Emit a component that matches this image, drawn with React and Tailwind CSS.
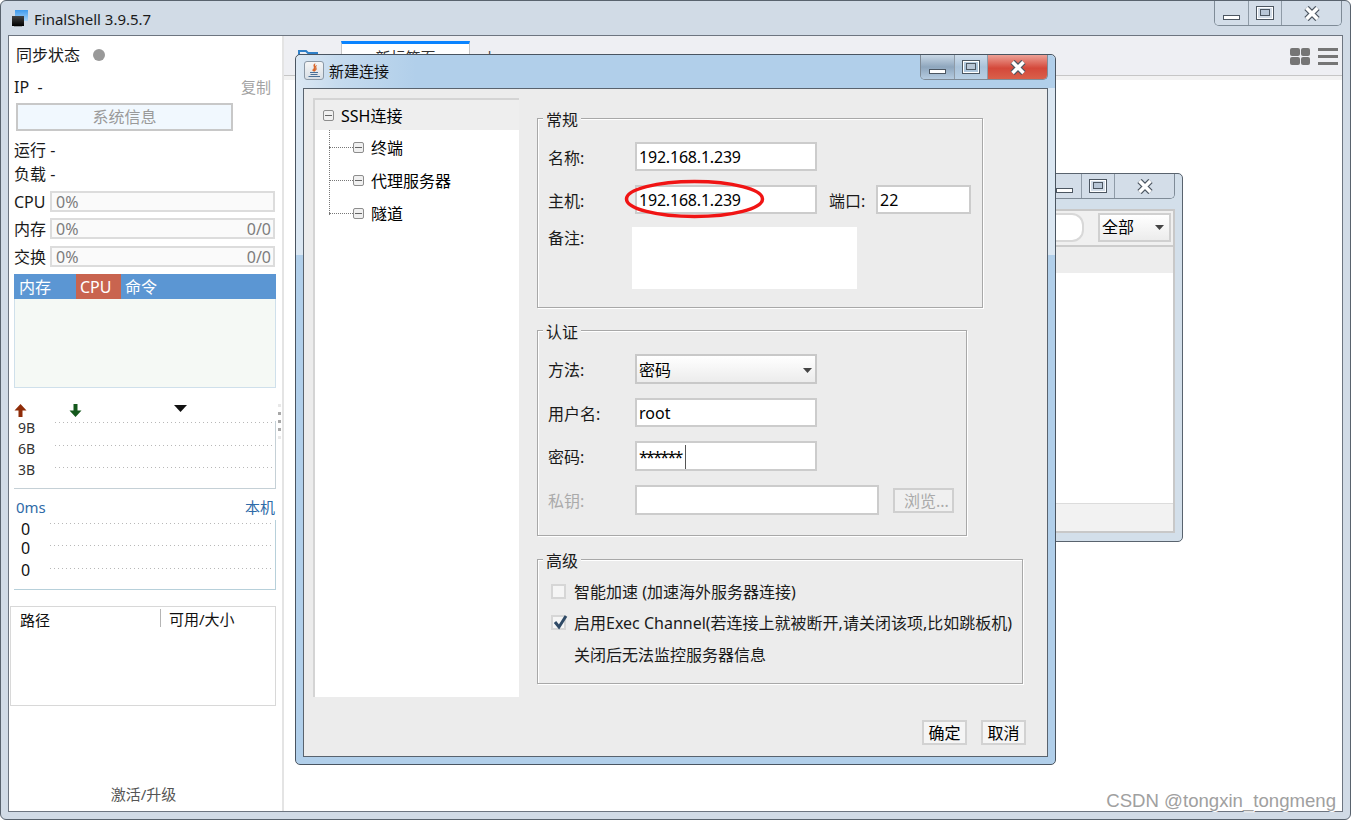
import React from "react";

const font = "font-['Noto_Sans','Noto_Sans_CJK_SC',sans-serif]";

const Glyph = ({ type }) => {
  if (type === "min") {
    return (
      <svg width="18" height="7" viewBox="0 0 18 7">
        <rect x="0.5" y="1.5" width="16" height="4" fill="#fff" stroke="#4c5661" />
      </svg>
    );
  }
  if (type === "max") {
    return (
      <svg width="18" height="14" viewBox="0 0 18 14">
        <rect x="0.5" y="0.5" width="17" height="13" fill="none" stroke="#4c5661" />
        <rect x="1.5" y="1.5" width="15" height="11" fill="none" stroke="#fff" />
        <rect x="4.5" y="3.5" width="9" height="6" fill="#b8c6d6" stroke="#4c5661" />
      </svg>
    );
  }
  return (
    <svg width="16" height="15" viewBox="0 0 16 15">
      <path d="M2.5 2 L13.5 13 M13.5 2 L2.5 13" stroke="#4c5661" strokeWidth="6" />
      <path d="M2.5 2 L13.5 13 M13.5 2 L2.5 13" stroke="#fff" strokeWidth="3.6" />
    </svg>
  );
};

const WinButtons = ({ active }) => (
  <div className="flex h-[25px] border border-t-0 border-[#7f8b97] rounded-b-[5px] overflow-hidden shrink-0">
    <div className={`w-[34px] flex items-end justify-center pb-[4px] border-r border-[#8f9ba7] ${active ? "bg-[linear-gradient(#c9d8e6,#8ea6bd_50%,#b5cbe0)]" : "bg-[#d3dde8]"}`}>
      <Glyph type="min" />
    </div>
    <div className={`w-[33px] flex items-center justify-center border-r border-[#8f9ba7] ${active ? "bg-[linear-gradient(#cfdeec,#a9c2d9_50%,#b8cfe4)]" : "bg-[#d3dde8]"}`}>
      <Glyph type="max" />
    </div>
    <div className={`w-[59px] flex items-center justify-center ${active ? "bg-[linear-gradient(#eda196,#d4483a_55%,#d9604a)]" : "bg-[#d3dde8]"}`}>
      <Glyph type="close" />
    </div>
  </div>
);

const Dots = ({ cls }) => (
  <div className={`h-[1px] bg-[repeating-linear-gradient(90deg,#b8b8b8_0,#b8b8b8_1px,transparent_1px,transparent_4px)] ${cls}`} />
);

const Metric = ({ label, value, extra, cls }) => (
  <div className={`flex items-center h-[21px] ml-[5px] ${cls}`}>
    <span className="w-[36px] pt-[2px] text-[#1a1a1a] leading-[21px] whitespace-nowrap">{label}</span>
    <div className="w-[225px] h-[21px] border-2 border-[#dcdcdc] bg-[#fafafa] flex items-center justify-between pl-[4px] pr-[2px] pt-[2px] text-[#7d7d7d] leading-[17px]">
      <span>{value}</span>
      <span>{extra}</span>
    </div>
  </div>
);

const netRows = [
  { label: "9B", h: "h-[21px]", line: "mt-[1px]" },
  { label: "6B", h: "h-[21px]", line: "mt-[3px]" },
  { label: "3B", h: "h-[28px]", line: "mt-[4px]" },
];

const pingRows = [
  { h: "h-[20px]", line: "mt-[3px]", text: "pt-[1px]" },
  { h: "h-[21px]", line: "mt-[5px]", text: "" },
  { h: "h-[29px]", line: "mt-[7px]", text: "pt-[1px]" },
];

const Sidebar = () => (
  <div className="relative w-[275px] shrink-0 bg-white border-r-2 border-[#e4e4e4] flex flex-col">
    <div className="h-[38px] pl-[7px] flex items-center gap-[13px] text-[#1a1a1a]">
      <span>同步状态</span>
      <span className="w-[12px] h-[12px] rounded-full bg-[#999999]" />
    </div>
    <div className="h-[26px] pl-[5px] pr-[11px] flex items-center justify-between">
      <span className="text-[#1a1a1a]">IP&nbsp; -</span>
      <span className="text-[#a3a3a3] text-[15px]">复制</span>
    </div>
    <div className="mt-[3px] ml-[7px] w-[217px] h-[28px] border-2 border-[#c8c8c8] bg-[#f1f8fe] text-[#9a9a9a] flex items-center justify-center">
      系统信息
    </div>
    <div className="mt-[7px] pl-[5px] h-[24px] leading-[24px] text-[#1a1a1a]">运行 -</div>
    <div className="pl-[5px] h-[24px] leading-[24px] text-[#1a1a1a]">负载 -</div>
    <Metric label="CPU" value="0%" cls="mt-[5px]" />
    <Metric label="内存" value="0%" extra="0/0" cls="mt-[6px]" />
    <Metric label="交换" value="0%" extra="0/0" cls="mt-[7px]" />
    <div className="mt-[7px] ml-[5px] w-[262px] h-[25px] bg-[#5b96d3] flex text-white leading-[27px]">
      <span className="w-[62px] pl-[5px]">内存</span>
      <span className="w-[45px] bg-[#c9644f] pl-[4px]">CPU</span>
      <span className="pl-[4px]">命令</span>
    </div>
    <div className="ml-[5px] w-[262px] h-[89px] bg-[#f5f9f5] border border-t-0 border-[#cfe0eb]" />
    <div className="mt-[15px] ml-[5px] w-[262px] h-[18px] flex items-start">
      <svg className="mt-[1px]" width="13" height="13" viewBox="0 0 13 13">
        <path d="M6.5 0 L12.5 6.5 H8.5 V13 H4.5 V6.5 H0.5 Z" fill="#8f2c08" />
      </svg>
      <svg className="mt-[1px] ml-[42px]" width="13" height="13" viewBox="0 0 13 13">
        <path d="M4.5 0 H8.5 V6.5 H12.5 L6.5 13 L0.5 6.5 H4.5 Z" fill="#14581c" />
      </svg>
      <svg className="mt-[2px] ml-[92px]" width="13" height="7" viewBox="0 0 13 7">
        <path d="M0 0 H13 L6.5 7 Z" fill="#111" />
      </svg>
    </div>
    <div className="ml-[5px] w-[262px] h-[68px] border-r border-b border-[#c5d0d6] text-[14px] text-[#333]">
      {netRows.map((r) => (
        <div key={r.label} className={`flex items-start ${r.h}`}>
          <span className="w-[41px] pl-[4px] leading-[14px]">{r.label}</span>
          <Dots cls={`w-[217px] ${r.line}`} />
        </div>
      ))}
    </div>
    <div className="mt-[9px] ml-[5px] w-[262px] h-[18px] pr-[1px] flex items-center justify-between text-[#2f6ba8] text-[15px] leading-[18px]">
      <span className="pl-[2px]">0ms</span>
      <span>本机</span>
    </div>
    <div className="mt-[4px] ml-[5px] w-[262px] h-[70px] border-r border-b border-[#b7d0da] text-[16px] text-[#111]">
      {pingRows.map((r, i) => (
        <div key={i} className={`flex items-start ${r.h}`}>
          <span className={`w-[36px] pl-[7px] leading-[16px] ${r.text}`}>0</span>
          <Dots cls={`w-[222px] ${r.line}`} />
        </div>
      ))}
    </div>
    <div className="mt-[16px] ml-[1px] w-[266px] h-[100px] border border-[#d8d8d8] flex items-start text-[#111] text-[15px]">
      <span className="w-[149px] pl-[9px] leading-[24px] mt-[1px]">路径</span>
      <span className="border-l border-[#b5b5b5] h-[18px] mt-[2px] pl-[8px] leading-[20px] whitespace-nowrap">可用/大小</span>
    </div>
    <div className="mt-auto h-[30px] mb-[2px] pr-[4px] flex items-center justify-center text-[#555] text-[15px]">激活/升级</div>
    <div className="absolute left-[269px] top-[368px] w-[3px] flex flex-col gap-[5px]">
      <span className="h-[3px] bg-[#e8e8e8]" />
      <span className="h-[3px] bg-[#a8a8a8]" />
      <span className="h-[3px] bg-[#a8a8a8]" />
      <span className="h-[3px] bg-[#a8a8a8]" />
      <span className="h-[3px] bg-[#e8e8e8]" />
    </div>
  </div>
);

const Toolbar = () => (
  <div className="h-[40px] bg-[#eeeff3] border-b border-[#c6c6c6] flex items-end pl-[14px] pr-[4px] shrink-0">
    <svg className="mb-[9px]" width="20" height="18" viewBox="0 0 20 18">
      <path d="M1 16 V3 H8 L10 5 H19 V16 Z" fill="none" stroke="#2f80c8" strokeWidth="2" />
    </svg>
    <div className="ml-[23px] w-[129px] h-[34px] bg-white border border-b-0 border-[#c6c6c6] border-t-[3px] border-t-[#0a84ff] text-center text-[#333] text-[15px] leading-[26px] shrink-0">
      新标签页
    </div>
    <span className="ml-[15px] mb-[10px] text-[#444] leading-[20px]">+</span>
    <div className="ml-auto mb-[10px] flex items-center gap-[8px]">
      <div className="grid grid-cols-2 gap-[1px] w-[20px]">
        <span className="h-[8px] rounded-[2px] bg-[#757575]" />
        <span className="h-[8px] rounded-[2px] bg-[#757575]" />
        <span className="h-[8px] rounded-[2px] bg-[#757575]" />
        <span className="h-[8px] rounded-[2px] bg-[#757575]" />
      </div>
      <div className="flex flex-col gap-[4px] w-[20px]">
        <span className="h-[3px] bg-[#757575]" />
        <span className="h-[3px] bg-[#757575]" />
        <span className="h-[3px] bg-[#757575]" />
      </div>
    </div>
  </div>
);

const Arrow = () => (
  <svg width="9" height="5" viewBox="0 0 9 5"><path d="M0 0 H9 L4.5 5 Z" fill="#444" /></svg>
);

const BackWindow = () => (
  <div className="absolute left-[700px] top-[173px] w-[483px] h-[369px] rounded-[5px] border border-[#59636e] bg-[#d3dfea] flex flex-col pl-[8px] pr-[7px] pb-[8px]">
    <div className="h-[35px] flex justify-end">
      <WinButtons />
    </div>
    <div className="flex-1 border-2 border-[#c8c8c8] bg-white flex flex-col">
      <div className="h-[36px] bg-[#f0f0f0] border-b-2 border-[#cccccc] flex items-center justify-end pr-[2px] pb-[2px]">
        <div className="h-[29px] w-[200px] bg-white border-2 border-[#d8d8d8] rounded-r-[12px]" />
        <div className="ml-[14px] w-[73px] h-[29px] border-2 border-[#d0d0d0] bg-[linear-gradient(#ffffff,#ececec)] flex items-center justify-between pl-[2px] pr-[5px] text-black">
          <span>全部</span>
          <Arrow />
        </div>
      </div>
      <div className="h-[26px] bg-[#ededed]" />
      <div className="flex-1" />
      <div className="h-[28px] bg-[#f2f2f2] border-t border-[#dcdcdc]" />
    </div>
  </div>
);

const Minus = () => (
  <span className="w-[11px] h-[11px] rounded-[2px] border border-[#8d8d8d] bg-[#f0f0f0] flex items-center justify-center shrink-0">
    <span className="w-[7px] h-[1px] bg-[#666]" />
  </span>
);

const TreeChild = ({ text, cls }) => (
  <div className={`flex items-center ${cls}`}>
    <span className="w-[24px] ml-[14px] border-t border-dotted border-[#777]" />
    <Minus />
    <span className="ml-[7px] pt-[1px] text-black">{text}</span>
  </div>
);

const Tree = () => (
  <div className="relative w-[206px] h-[599px] border-t-2 border-l-2 border-[#d4d4d4] bg-white shrink-0">
    <div className="h-[30px] bg-[#eeeeee] flex items-center pl-[8px]">
      <Minus />
      <span className="ml-[7px] pt-[2px] text-black">SSH连接</span>
    </div>
    <div className="absolute left-[14px] top-[30px] h-[85px] border-l border-dotted border-[#777]" />
    <TreeChild text="终端" cls="mt-[1px] h-[33px]" />
    <TreeChild text="代理服务器" cls="h-[33px]" />
    <TreeChild text="隧道" cls="h-[32px]" />
  </div>
);

const Group = ({ title, cls, children }) => (
  <div className={`border border-[#a8a8a8] shadow-[inset_1px_1px_0_#fff,1px_1px_0_#fff] ${cls}`}>
    <div className="-mt-[11px] ml-[5px] w-fit px-[3px] h-[22px] leading-[24px] bg-[#ececec] text-[#1a1a1a]">{title}</div>
    {children}
  </div>
);

const Field = ({ w = "w-[182px]", h = "h-[29px]", children }) => (
  <div className={`${w} ${h} border-2 border-[#cccccc] bg-white pl-[2px] pt-[2px] flex items-center text-black leading-[25px]`}>
    {children}
  </div>
);

const Ip = ({ children }) => <span className="tracking-[-0.2px]">{children}</span>;

const Row = ({ label, cls = "", muted, children }) => (
  <div className={`flex items-center ml-[10px] ${cls}`}>
    <span className={`w-[87px] shrink-0 pt-[2px] ${muted ? "text-[#aaaaaa]" : "text-[#1a1a1a]"}`}>{label}</span>
    {children}
  </div>
);

const Check = ({ checked }) => (
  <span className="relative w-[15px] h-[15px] border-2 border-[#d6d6d6] bg-[#f5f5f5] shrink-0">
    {checked && (
      <svg className="absolute -left-[1px] -top-[3px]" width="17" height="17" viewBox="0 0 17 17">
        <path d="M3 8 L7 13 L14 2" fill="none" stroke="#2f4a66" strokeWidth="3" />
      </svg>
    )}
  </span>
);

const Dialog = () => (
  <div className="absolute left-[295px] top-[54px] w-[761px] h-[711px] rounded-[5px] border border-[#4a5561] bg-[linear-gradient(#dbe7f2_0,#dbe7f2_200px,#b1cfea_200px)] flex flex-col px-[7px] pb-[7px]">
    <div className="h-[33px] flex items-start bg-[linear-gradient(90deg,#dce8f3,#c6dbee_40px,#b1cfea_120px,#b1cfea)] -mx-[7px] pl-[8px] pr-[7px] rounded-t-[5px] shrink-0">
      <span className="mt-[6px] w-[20px] h-[19px] rounded-[3px] border border-[#8b98a5] bg-[linear-gradient(#f5f5f5,#d8dfe6)] flex items-center justify-center">
        <svg width="15" height="15" viewBox="0 0 15 15">
          <path d="M8 0.5 C5 3 9 4 6 6.5 C5 8 7 8.5 8 8 C10 6 6.5 5 9.5 2.5 C8 4 10 5 9 7" fill="#d9662a" stroke="#d9662a" strokeWidth="0.7" />
          <path d="M3 9.5 H11 M3.5 11.5 H10.5 M1.5 13.5 H13" stroke="#4a6f96" strokeWidth="1.2" />
        </svg>
      </span>
      <span className="ml-[5px] mt-[5px] text-[15px] leading-[22px] text-[#111]">新建连接</span>
      <div className="ml-auto">
        <WinButtons active />
      </div>
    </div>
    <div className="flex-1 border border-[#59636e] bg-[#ececec] flex pl-[9px] pt-[9px]">
      <Tree />
      <div className="ml-[18px] mt-[20px] w-[489px] flex flex-col">
        <Group title="常规" cls="w-[446px] h-[190px]">
          <Row label="名称:" cls="mt-[12px]"><Field><Ip>192.168.1.239</Ip></Field></Row>
          <Row label="主机:" cls="mt-[14px]">
            <Field><Ip>192.168.1.239</Ip></Field>
            <span className="ml-[12px] w-[47px] pt-[2px] text-[#1a1a1a]">端口:</span>
            <Field w="w-[95px]">22</Field>
          </Row>
          <div className="flex items-start ml-[10px] mt-[13px]">
            <span className="w-[84px] leading-[22px] text-[#1a1a1a]">备注:</span>
            <div className="w-[225px] h-[62px] bg-white" />
          </div>
        </Group>
        <Group title="认证" cls="mt-[22px] w-[430px] h-[206px]">
          <Row label="方法:" cls="mt-[12px]">
            <div className="w-[182px] h-[30px] border-2 border-[#c8c8c8] bg-[linear-gradient(#ffffff,#ececec)] flex items-center justify-between pl-[2px] pt-[2px] pr-[3px] text-black">
              <span>密码</span>
              <Arrow />
            </div>
          </Row>
          <Row label="用户名:" cls="mt-[14px]"><Field>root</Field></Row>
          <Row label="密码:" cls="mt-[14px]">
            <Field h="h-[30px]">
              <span className="tracking-[-1.7px]">******</span>
              <span className="ml-[3px] w-[1px] h-[24px] bg-[#555]" />
            </Field>
          </Row>
          <Row label="私钥:" cls="mt-[14px]" muted>
            <Field w="w-[244px]" h="h-[30px]" />
            <div className="ml-[14px] w-[61px] h-[25px] border-2 border-[#cfcfcf] bg-[#f0f0f0] text-[#aaaaaa] pl-[9px] pt-[2px] flex items-center">浏览...</div>
          </Row>
        </Group>
        <Group title="高级" cls="mt-[23px] w-[486px] h-[125px]">
          <div className="flex items-center ml-[13px] mt-[5px] h-[31px] text-[#1a1a1a]">
            <Check />
            <span className="ml-[8px]">智能加速 (加速海外服务器连接)</span>
          </div>
          <div className="flex items-center ml-[13px] h-[31px] text-[#1a1a1a] whitespace-nowrap">
            <Check checked />
            <span className="ml-[8px]">启用Exec Channel(若连接上就被断开,请关闭该项,比如跳板机)</span>
          </div>
          <div className="ml-[36px] h-[32px] leading-[34px] text-[#1a1a1a]">关闭后无法监控服务器信息</div>
        </Group>
        <div className="mt-[36px] flex justify-end gap-[14px]">
          <div className="w-[45px] h-[25px] border-2 border-[#d2d2d2] bg-[#f5f5f5] flex items-center justify-center text-black">确定</div>
          <div className="w-[45px] h-[25px] border-2 border-[#d2d2d2] bg-[#f5f5f5] flex items-center justify-center text-black">取消</div>
        </div>
      </div>
    </div>
  </div>
);

export default function App() {
  return (
    <div className={`relative w-[1351px] h-[820px] overflow-hidden bg-white text-[16px] ${font}`}>
      <div className="w-full h-full rounded-[6px] border border-[#59636e] bg-[#d1dbe6] flex flex-col px-[7px] pb-[7px]">
        <div className="h-[34px] flex items-start shrink-0">
          <svg className="mt-[8px] ml-[2px]" width="18" height="18" viewBox="0 0 18 18">
            <defs>
              <linearGradient id="tb" x1="0" y1="0" x2="0" y2="1">
                <stop offset="0" stopColor="#3f9bee" />
                <stop offset="1" stopColor="#a9d4f7" />
              </linearGradient>
              <linearGradient id="tk" x1="0" y1="0" x2="0" y2="1">
                <stop offset="0" stopColor="#444" />
                <stop offset="1" stopColor="#000" />
              </linearGradient>
            </defs>
            <rect x="5" y="1" width="13" height="11" fill="url(#tb)" />
            <rect x="2" y="7" width="12" height="10" fill="url(#tk)" />
            <rect x="4" y="17" width="8" height="1" fill="#9aa0a6" />
          </svg>
          <span className="ml-[6px] mt-[7px] leading-[22px] text-[#1a1a1a] text-[15px]">FinalShell 3.9.5.7</span>
          <div className="ml-auto mr-[1px]">
            <WinButtons />
          </div>
        </div>
        <div className="flex-1 flex border border-[#6d7580] bg-white min-h-0">
          <Sidebar />
          <div className="flex-1 flex flex-col">
            <Toolbar />
            <div className="h-[4px] bg-[#f2f2f2]" />
            <div className="flex-1 bg-white" />
          </div>
        </div>
      </div>
      <BackWindow />
      <Dialog />
      <svg className="absolute left-[624px] top-[179px]" width="142" height="40" viewBox="0 0 142 40">
        <ellipse cx="70.5" cy="20" rx="68" ry="17.5" fill="none" stroke="#f01414" strokeWidth="3.5" />
      </svg>
      <span className="absolute right-[15px] top-[789px] font-['Liberation_Sans',sans-serif] text-[18.6px] leading-[24px] text-[#a0a0a0] [text-shadow:1px_1px_0_#fff] whitespace-nowrap">CSDN @tongxin_tongmeng</span>
    </div>
  );
}
